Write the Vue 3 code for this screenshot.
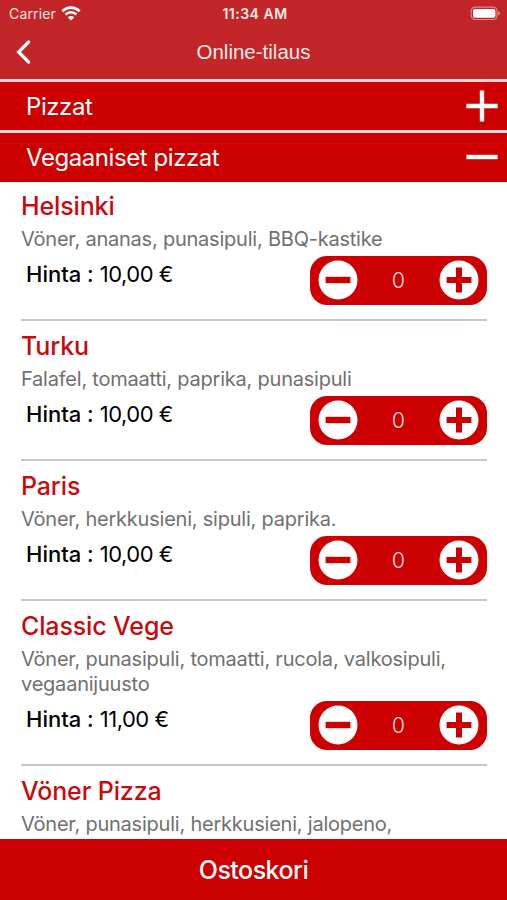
<script setup>
import { ref } from 'vue'

const items = ref([
  { name: 'Helsinki', lines: ['Vöner, ananas, punasipuli, BBQ-kastike'], price: '10,00 €', qty: 0 },
  { name: 'Turku', lines: ['Falafel, tomaatti, paprika, punasipuli'], price: '10,00 €', qty: 0 },
  { name: 'Paris', lines: ['Vöner, herkkusieni, sipuli, paprika.'], price: '10,00 €', qty: 0 },
  { name: 'Classic Vege', lines: ['Vöner, punasipuli, tomaatti, rucola, valkosipuli,', 'vegaanijuusto'], price: '11,00 €', qty: 0 },
  { name: 'Vöner Pizza', lines: ['Vöner, punasipuli, herkkusieni, jalopeno,'], price: null, qty: 0 },
])
</script>

<template>
  <div class="screen">
    <header class="top">
      <div class="status">
        <div class="carrier">
          <span>Carrier</span>
          <svg class="wifi" width="20" height="15" viewBox="0 0 20 15">
            <path d="M1.4 5.2C6.3.4 13.7.4 18.6 5.2" fill="none" stroke="#fff" stroke-width="2.8" />
            <path d="M4.5 8.6c3.2-3 7.8-3 11 0" fill="none" stroke="#fff" stroke-width="2.5" />
            <path d="M10 14.6 6.8 11.2c1.9-1.7 4.5-1.7 6.4 0z" fill="#fff" />
          </svg>
        </div>
        <span class="time">11:34 AM</span>
        <svg class="battery" width="31" height="15" viewBox="0 0 31 15">
          <rect x="1.2" y="1.1" width="25.8" height="12.4" rx="4" fill="none" stroke="#fff" stroke-opacity=".45" stroke-width="1.2" />
          <rect x="3" y="2.9" width="22.4" height="8.9" rx="2" fill="#fff" />
          <path d="M28.2 5.2c2.2.7 2.2 3.5 0 4.2z" fill="#fff" fill-opacity=".5" />
        </svg>
      </div>
      <div class="nav">
        <svg class="back" width="16" height="26" viewBox="0 0 16 26">
          <path d="M13.6 3 3.6 13l10 10" fill="none" stroke="#fff" stroke-width="3.2" stroke-linecap="round" stroke-linejoin="miter" />
        </svg>
        <h1>Online-tilaus</h1>
      </div>
    </header>

    <div class="category">
      <span>Pizzat</span>
      <svg width="32" height="32" viewBox="0 0 32 32"><path d="M.4 16h31.2M16 .4v31.2" stroke="#fff" stroke-width="4.4" /></svg>
    </div>
    <div class="category">
      <span>Vegaaniset pizzat</span>
      <svg width="32" height="32" viewBox="0 0 32 32"><path d="M.4 16h31.2" stroke="#fff" stroke-width="4.4" /></svg>
    </div>

    <main class="list">
      <article v-for="item in items" :key="item.name" class="item">
        <h2>{{ item.name }}</h2>
        <p v-for="line in item.lines" :key="line">{{ line }}</p>
        <div v-if="item.price" class="buy">
          <div class="price"><b>Hinta :</b><span>{{ item.price }}</span></div>
          <div class="stepper">
            <button aria-label="−" @click="item.qty = Math.max(0, item.qty - 1)">
              <svg width="40" height="40" viewBox="0 0 40 40"><circle cx="20" cy="20" r="19.5" fill="#fff" /><path d="M7.6 20h24.8" stroke="#c00" stroke-width="6.4" /></svg>
            </button>
            <span class="qty">{{ item.qty }}</span>
            <button aria-label="+" @click="item.qty++">
              <svg width="40" height="40" viewBox="0 0 40 40"><circle cx="20" cy="20" r="19.5" fill="#fff" /><path d="M7.6 20h24.8M20 7.6v24.8" stroke="#c00" stroke-width="6" /></svg>
            </button>
          </div>
        </div>
      </article>
    </main>

    <footer class="cart"><span>Ostoskori</span></footer>
  </div>
</template>

<style>
body { background: #fff; }
</style>

<style scoped>
.screen {
  width: 507px;
  height: 900px;
  display: flex;
  flex-direction: column;
  overflow: hidden;
  background: #fff;
  font-family: Inter, "Liberation Sans", sans-serif;
}
.top { height: 79px; flex: none; background: #c22628; color: #fff; }
.status {
  height: 27px;
  display: grid;
  grid-template-columns: 1fr auto 1fr;
  align-items: center;
  padding: 0 6px 0 9px;
  font-size: 14px;
}
.carrier { display: flex; align-items: center; gap: 5px; color: #ffe3e0; letter-spacing: 0.15px; }
.time { font-weight: 600; font-size: 14px; letter-spacing: 0.5px; color: #ffe9e7; }
.battery { justify-self: end; }
.nav { height: 50px; display: grid; grid-template-columns: 40px 1fr 40px; align-items: center; }
.back { margin-left: 15px; }
h1 {
  margin: 0;
  text-align: center;
  font: 400 20.5px/26px "Liberation Sans", sans-serif;
  color: #ffe9e7;
}
.category {
  box-sizing: border-box;
  height: 51.3px;
  flex: none;
  border-top: 3px solid #f6dada;
  background: #c00;
  color: #fff;
  display: flex;
  align-items: center;
  justify-content: space-between;
  padding: 0 9px 0 26px;
  font-size: 24px;
  letter-spacing: -0.43px;
}
.list { flex: 1; min-height: 0; overflow: hidden; padding: 0 20px 0 21px; }
.item { border-bottom: 2px solid #c6c6c6; padding-top: 9px; }
.item:first-child { padding-top: 8px; }
.item:last-child { border-bottom: 0; }
h2 { margin: 0 0 5px; font-size: 25px; line-height: 32px; font-weight: 500; letter-spacing: -0.13px; color: #c80a0c; }
p { margin: 0; font-size: 20px; line-height: 25px; letter-spacing: -0.22px; color: #707070; white-space: nowrap; }
.buy { display: flex; justify-content: space-between; height: 67px; }
.price { display: flex; gap: 6px; padding: 8px 0 0 5px; font-size: 22px; line-height: 28px; color: #000; }
.price b { font-weight: 500; }
.price span { letter-spacing: -0.5px; }
.stepper {
  margin-top: 4px;
  width: 177px;
  height: 49px;
  box-sizing: border-box;
  border-radius: 17px;
  background: #c00;
  display: flex;
  align-items: center;
  justify-content: space-between;
  padding: 0 8px;
}
button { border: 0; padding: 0; background: none; display: flex; }
.qty { font-size: 21.5px; font-weight: 300; color: #ffdcdc; }
.cart {
  box-sizing: border-box;
  height: 61.5px;
  padding-top: 1.5px;
  flex: none;
  background: #c00;
  color: #fff;
  display: flex;
  align-items: center;
  justify-content: center;
  font-size: 25px;
  font-weight: 500;
  letter-spacing: -0.55px;
}
</style>
